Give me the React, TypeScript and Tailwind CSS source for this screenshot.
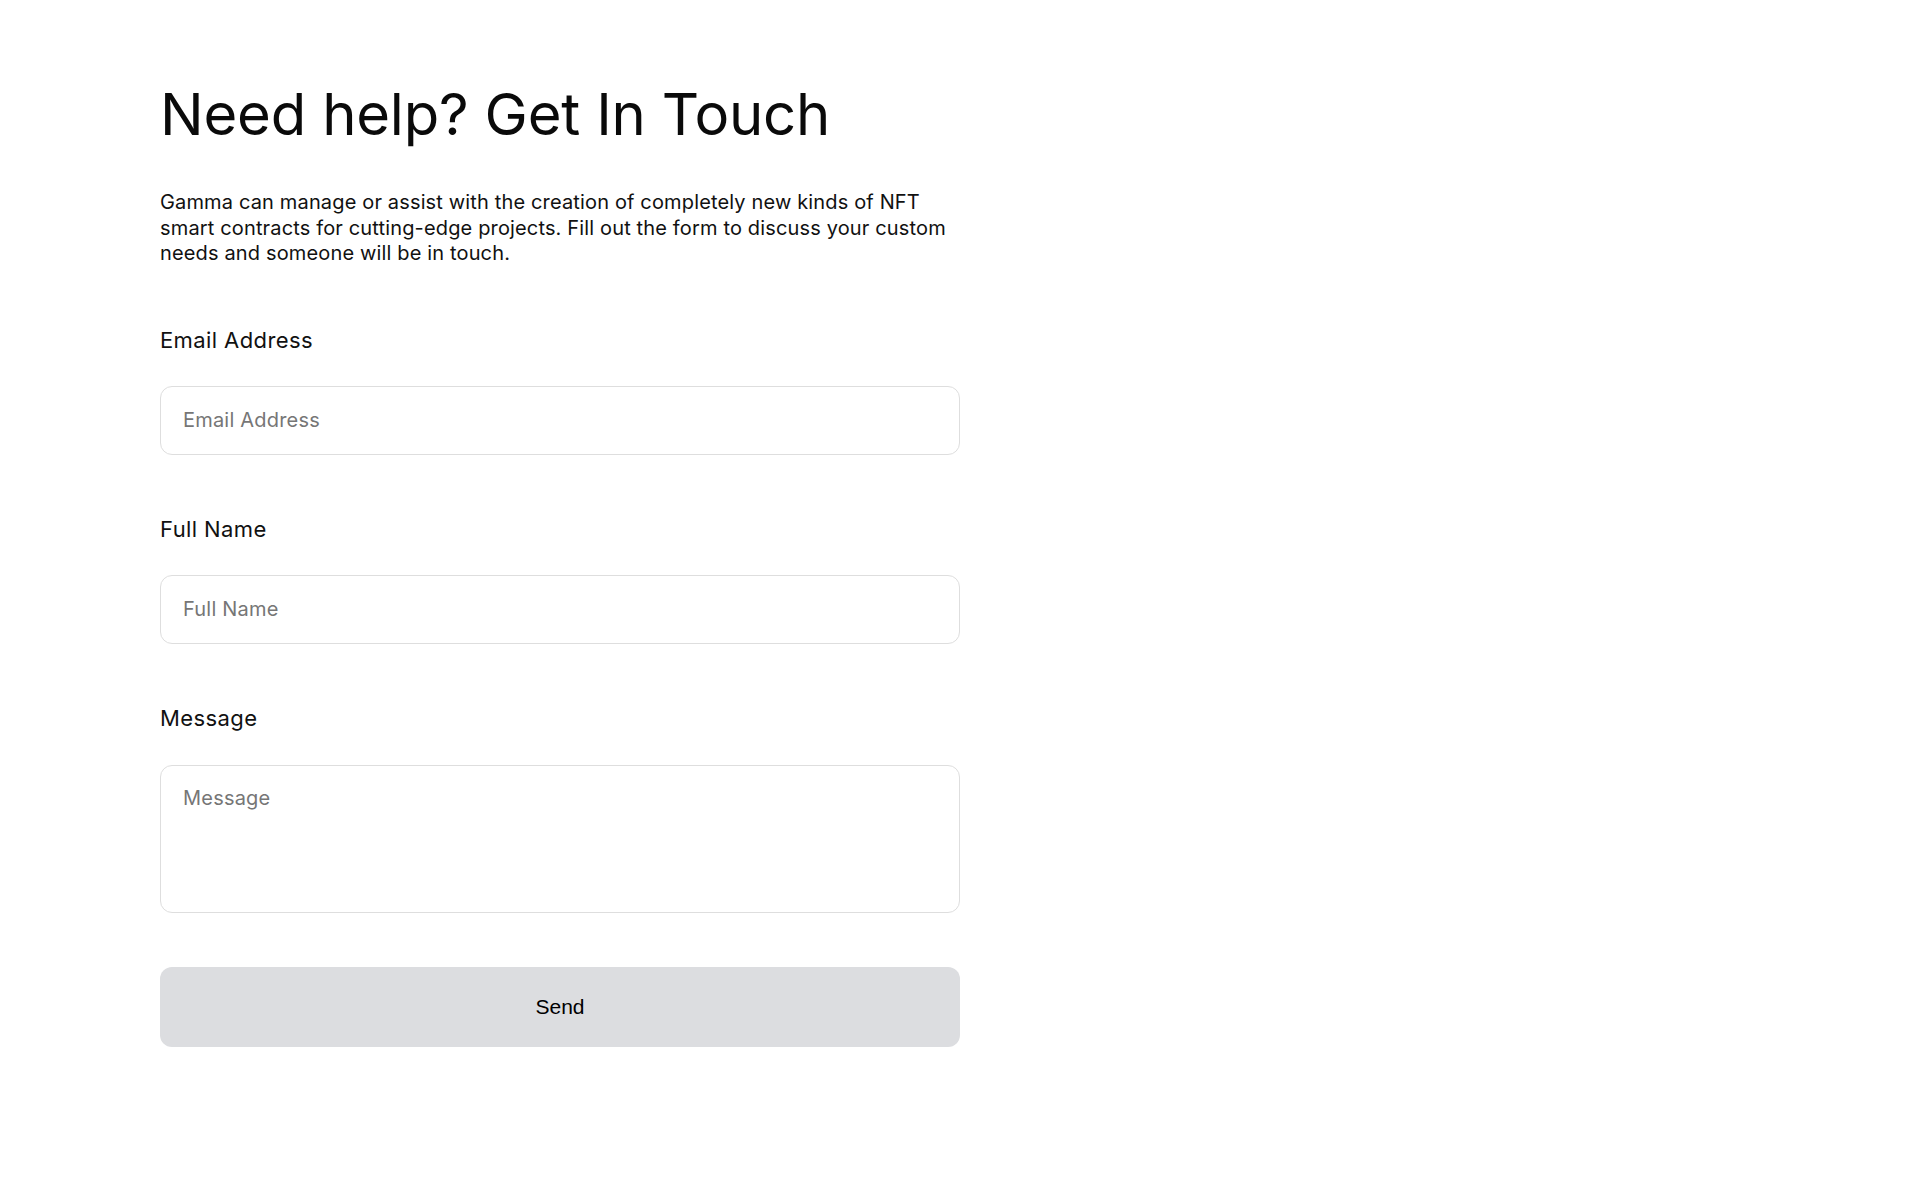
import React from "react"

const font = { fontFamily: "Inter, 'Noto Sans', sans-serif" }

function Field({ label, placeholder, area = false }: { label: string; placeholder: string; area?: boolean }) {
  return (
    <div className="flex flex-col">
      <label className="text-[22px] leading-[28px] tracking-[0.4px] text-[#111111]">{label}</label>
      {area ? (
        <textarea
          placeholder={placeholder}
          className="mt-[33px] h-[148px] w-full resize-none rounded-[12px] border border-[#dedede] bg-white px-[22px] py-[18px] text-[20px] leading-[28px] tracking-[0.2px] text-[#111111] placeholder:text-[#767676] outline-none"
        />
      ) : (
        <input
          placeholder={placeholder}
          className="mt-[32px] h-[69px] w-full rounded-[12px] border border-[#dedede] bg-white px-[22px] text-[20px] tracking-[0.2px] text-[#111111] placeholder:text-[#767676] outline-none"
        />
      )}
    </div>
  )
}

export default function App() {
  return (
    <div className="min-h-screen bg-white" style={font}>
      <div className="w-[800px] ml-[160px] pt-[79px]">
        <h1 className="text-[58px] leading-[70px] font-normal text-[#0a0a0a] tracking-[-0.2px]">
          Need help? Get In Touch
        </h1>
        <p className="mt-[41px] text-[20px] leading-[25.5px] tracking-[0.15px] text-[#111111]">
          Gamma can manage or assist with the creation of completely new kinds of NFT smart contracts for
          cutting-edge projects. Fill out the form to discuss your custom needs and someone will be in touch.
        </p>
        <form className="mt-[59px] flex flex-col gap-[60px]" onSubmit={(e) => e.preventDefault()}>
          <Field label="Email Address" placeholder="Email Address" />
          <Field label="Full Name" placeholder="Full Name" />
          <Field label="Message" placeholder="Message" area />
          <button
            type="submit"
            className="-mt-[6px] h-[80px] w-full rounded-[12px] bg-[#dcdde0] text-[21px] text-black"
            style={{ fontFamily: "'Liberation Sans', Arial, sans-serif" }}
          >
            Send
          </button>
        </form>
      </div>
    </div>
  )
}
